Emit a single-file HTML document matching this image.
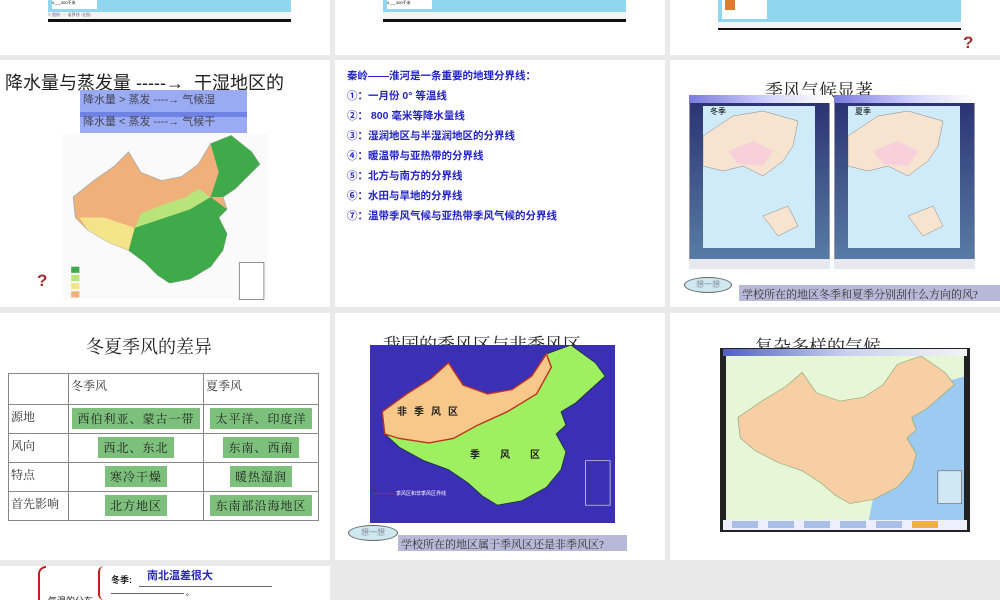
<!DOCTYPE html>
<html><head><meta charset="utf-8">
<style>
*{margin:0;padding:0;box-sizing:border-box}
body{width:1000px;height:600px;background:#e9e9e9;position:relative;overflow:hidden;font-family:"Liberation Sans","Noto Sans CJK SC",sans-serif}
.s{position:absolute;background:#fff;overflow:hidden}
.a{position:absolute}
.blue{color:#2323c8;font-weight:bold;font-size:10.5px;position:absolute;left:12px;white-space:nowrap}
.ser{font-family:"Liberation Serif","Noto Serif CJK SC",serif}
table{border-collapse:collapse}
td{border:1px solid #888;font-size:12px;color:#333;vertical-align:top;padding:3px 2px;font-family:"Liberation Serif","Noto Serif CJK SC",serif}
.g{background:#7cc07c;display:inline-block;padding:2px 5px;color:#222;letter-spacing:1px}
</style></head><body>
<svg width="0" height="0" style="position:absolute"><defs>
<path id="cn" d="M5,30 L15,22 L25,15 L32,8 L38,18 L48,22 L58,20 L66,14 L72,4 L82,0 L92,8 L96,14 L90,20 L84,26 L78,30 L80,36 L76,40 L80,48 L78,56 L72,64 L62,70 L52,72 L46,68 L40,62 L32,56 L22,52 L12,46 L6,40 Z"/>
</defs></svg>

<!-- Row 1 -->
<div class="s" style="left:0;top:0;width:330px;height:55px">
 <div class="a" style="left:48px;top:0;width:243px;height:12px;background:#8fd6ee"></div>
 <div class="a" style="left:52px;top:0;width:45px;height:9px;background:#fff;font-size:4px">0___300千米</div>
 <div class="a" style="left:48px;top:12px;width:243px;height:7px;background:#f4f4f4;font-size:4px;color:#668">⠿ 图例 ···· 省界线 ‹全图›</div>
 <div class="a" style="left:48px;top:19px;width:243px;height:3px;background:#111"></div>
</div>
<div class="s" style="left:335px;top:0;width:330px;height:55px">
 <div class="a" style="left:48px;top:0;width:243px;height:12px;background:#8fd6ee"></div>
 <div class="a" style="left:52px;top:0;width:45px;height:9px;background:#fff;font-size:4px">0___300千米</div>
 <div class="a" style="left:48px;top:12px;width:243px;height:7px;background:#f4f4f4"></div>
 <div class="a" style="left:48px;top:19px;width:243px;height:3px;background:#111"></div>
</div>
<div class="s" style="left:670px;top:0;width:330px;height:55px">
 <div class="a" style="left:48px;top:0;width:243px;height:22px;background:#8fd6ee"></div>
 <div class="a" style="left:52px;top:0;width:45px;height:19px;background:#fff"></div>
 <div class="a" style="left:55px;top:0;width:10px;height:10px;background:#e07a30"></div>
 <div class="a" style="left:48px;top:22px;width:243px;height:6px;background:#f4f4f4"></div>
 <div class="a" style="left:48px;top:28px;width:243px;height:2px;background:#111"></div>
 <div class="a" style="left:293px;top:33px;color:#a03030;font-weight:bold;font-size:17px">?</div>
</div>

<!-- Row 2 -->
<div class="s" style="left:0;top:60px;width:330px;height:247px">
 <div class="a" style="left:5px;top:9px;font-size:18px;color:#222;white-space:nowrap">降水量与蒸发量 -----→&nbsp; 干湿地区的</div>
 <div class="a" style="left:80px;top:30px;width:167px;height:43px;background:#8fa2f2;opacity:.9"></div>
 <div class="a" style="left:80px;top:52px;width:167px;height:5px;background:#6f82e6"></div>
 <div class="a" style="left:83px;top:31px;font-size:11px;color:#445;white-space:nowrap">降水量 &gt; 蒸发 ----→ 气候湿</div>
 <div class="a" style="left:83px;top:53px;font-size:11px;color:#445;white-space:nowrap">降水量 &lt; 蒸发 ----→ 气候干</div>
 <div class="a" style="left:63px;top:74px;width:205px;height:165px;background:#fafafa"></div>
 <svg class="a" style="left:63px;top:75px" width="205" height="165" viewBox="0 0 100 80">
  <use href="#cn" fill="#f0b07a" stroke="#aaa" stroke-width=".4"/>
  <path d="M40,62 L32,56 L35,45 L50,40 L62,36 L72,30 L80,36 L76,40 L80,48 L78,56 L72,64 L62,70 L52,72 L46,68Z" fill="#3eaa4a"/>
  <path d="M35,45 L50,40 L62,36 L72,30 L66,26 L60,30 L48,34 L38,38Z" fill="#b8e47a"/>
  <path d="M82,0 L92,8 L96,14 L90,20 L84,26 L78,30 L72,30 L76,18 L72,4Z" fill="#3eaa4a"/>
  <path d="M12,46 L22,52 L32,56 L35,45 L20,40 L8,40Z" fill="#f3e48a"/>
  <rect x="4" y="64" width="4" height="3" fill="#3eaa4a"/><rect x="4" y="68" width="4" height="3" fill="#b8e47a"/><rect x="4" y="72" width="4" height="3" fill="#f3e48a"/><rect x="4" y="76" width="4" height="3" fill="#f0b07a"/>
  <rect x="86" y="62" width="12" height="18" fill="#fff" stroke="#777" stroke-width=".4"/>
 </svg>
 <div class="a" style="left:37px;top:211px;color:#a03030;font-weight:bold;font-size:17px">?</div>
</div>

<div class="s" style="left:335px;top:60px;width:330px;height:247px">
 <div class="blue" style="top:8px">秦岭——淮河是一条重要的地理分界线：</div>
 <div class="blue" style="top:28px">①：一月份 0° 等温线</div>
 <div class="blue" style="top:48px">②： 800 毫米等降水量线</div>
 <div class="blue" style="top:68px">③：湿润地区与半湿润地区的分界线</div>
 <div class="blue" style="top:88px">④：暖温带与亚热带的分界线</div>
 <div class="blue" style="top:108px">⑤：北方与南方的分界线</div>
 <div class="blue" style="top:128px">⑥：水田与旱地的分界线</div>
 <div class="blue" style="top:148px">⑦：温带季风气候与亚热带季风气候的分界线</div>
</div>

<div class="s" style="left:670px;top:60px;width:330px;height:247px">
 <div class="a ser" style="left:95px;top:17px;font-size:18px;color:#222">季风气候显著</div>
 <div class="a" style="left:19px;top:35px;width:141px;height:174px;background:linear-gradient(#2a3070,#5a80a8);border:1px solid #99a"></div>
 <div class="a" style="left:19px;top:35px;width:141px;height:8px;background:linear-gradient(90deg,#7a7ae0,#d8d8ff 60%,#fff)"></div>
 <div class="a" style="left:33px;top:46px;width:112px;height:142px;background:#cfeaf8"></div>
 <svg class="a" style="left:33px;top:46px" width="112" height="142" viewBox="0 0 112 142"><path d="M0,30 L30,10 L60,5 L95,15 L90,40 L80,55 L60,70 L40,60 L20,65 L0,60Z" fill="#f6e4d0" stroke="#888" stroke-width=".5"/><path d="M25,45 L50,35 L70,45 L60,60 L35,58Z" fill="#f8d0dc"/><path d="M60,110 L85,100 L95,120 L75,130Z" fill="#f6e4d0" stroke="#888" stroke-width=".5"/></svg>
 <div class="a" style="left:40px;top:46px;font-size:8px">冬季</div>
 <div class="a" style="left:19px;top:199px;width:141px;height:10px;background:#e8e8f0"></div>
 <div class="a" style="left:164px;top:35px;width:141px;height:174px;background:linear-gradient(#2a3070,#5a80a8);border:1px solid #99a"></div>
 <div class="a" style="left:164px;top:35px;width:141px;height:8px;background:linear-gradient(90deg,#7a7ae0,#d8d8ff 60%,#fff)"></div>
 <div class="a" style="left:178px;top:46px;width:112px;height:142px;background:#cfeaf8"></div>
 <svg class="a" style="left:178px;top:46px" width="112" height="142" viewBox="0 0 112 142"><path d="M0,30 L30,10 L60,5 L95,15 L90,40 L80,55 L60,70 L40,60 L20,65 L0,60Z" fill="#f6e4d0" stroke="#888" stroke-width=".5"/><path d="M25,45 L50,35 L70,45 L60,60 L35,58Z" fill="#f8d0dc"/><path d="M60,110 L85,100 L95,120 L75,130Z" fill="#f6e4d0" stroke="#888" stroke-width=".5"/></svg>
 <div class="a" style="left:185px;top:46px;font-size:8px">夏季</div>
 <div class="a" style="left:164px;top:199px;width:141px;height:10px;background:#e8e8f0"></div>
 <div class="a" style="left:14px;top:217px;width:48px;height:16px;border-radius:50%;background:#cde8ee;border:1px solid #666;font-size:8px;color:#889;text-align:center;line-height:14px">想一想</div>
 <div class="a ser" style="left:69px;top:225px;width:261px;height:16px;background:#b8b8d8;font-size:11px;color:#333;padding:1px 3px;white-space:nowrap">学校所在的地区冬季和夏季分别刮什么方向的风?</div>
</div>

<!-- Row 3 -->
<div class="s" style="left:0;top:313px;width:330px;height:247px">
 <div class="a ser" style="left:86px;top:20px;font-size:18px;color:#222">冬夏季风的差异</div>
 <table class="a" style="left:8px;top:60px;width:311px;height:148px">
  <tr style="height:31px"><td style="width:60px"></td><td style="width:135px">冬季风</td><td>夏季风</td></tr>
  <tr><td>源地</td><td style="text-align:center"><span class="g">西伯利亚、蒙古一带</span></td><td style="text-align:center"><span class="g">太平洋、印度洋</span></td></tr>
  <tr><td>风向</td><td style="text-align:center"><span class="g">西北、东北</span></td><td style="text-align:center"><span class="g">东南、西南</span></td></tr>
  <tr><td>特点</td><td style="text-align:center"><span class="g">寒冷干燥</span></td><td style="text-align:center"><span class="g">暖热湿润</span></td></tr>
  <tr><td>首先影响</td><td style="text-align:center"><span class="g">北方地区</span></td><td style="text-align:center"><span class="g">东南部沿海地区</span></td></tr>
 </table>
</div>

<div class="s" style="left:335px;top:313px;width:330px;height:247px">
 <div class="a ser" style="left:48px;top:18px;font-size:18px;color:#222;white-space:nowrap">我国的季风区与非季风区</div>
 <div class="a" style="left:35px;top:32px;width:245px;height:178px;background:#3b2fb5"></div>
 <svg class="a" style="left:35px;top:32px" width="245" height="178" viewBox="0 0 100 80" preserveAspectRatio="none">
  <use href="#cn" fill="#9ef060" stroke="#234" stroke-width=".4"/>
  <path d="M5,30 L15,22 L25,15 L32,8 L38,18 L48,22 L58,20 L66,14 L72,4 L74,10 L68,22 L56,30 L44,36 L34,42 L24,44 L12,42 L6,40Z" fill="#f8c88a" stroke="#c03020" stroke-width=".6"/>
  <rect x="88" y="52" width="10" height="20" fill="none" stroke="#ddd" stroke-width=".3"/>
 </svg>
 <div class="a" style="left:62px;top:90px;font-size:10px;font-weight:bold;letter-spacing:7px;color:#222">非季风区</div>
 <div class="a" style="left:135px;top:133px;font-size:10px;font-weight:bold;letter-spacing:20px;color:#222">季风区</div>
 <div class="a" style="left:37px;top:180px;width:22px;height:1px;background:#c02040"></div>
 <div class="a" style="left:61px;top:177px;font-size:5px;color:#fff">季风区和非季风区界线</div>
 <div class="a" style="left:13px;top:212px;width:50px;height:16px;border-radius:50%;background:#cde8ee;border:1px solid #666;font-size:8px;color:#889;text-align:center;line-height:14px">想一想</div>
 <div class="a ser" style="left:63px;top:222px;width:229px;height:16px;background:#b8b8d8;font-size:11px;color:#333;padding:1px 3px;white-space:nowrap">学校所在的地区属于季风区还是非季风区?</div>
</div>

<div class="s" style="left:670px;top:313px;width:330px;height:247px">
 <div class="a ser" style="left:85px;top:20px;font-size:18px;color:#222">复杂多样的气候</div>
 <div class="a" style="left:50px;top:35px;width:250px;height:184px;background:#222"></div>
 <div class="a" style="left:53px;top:36px;width:244px;height:7px;background:linear-gradient(90deg,#5060c0,#c8d0f0 50%,#f4f4f4)"></div>
 <div class="a" style="left:56px;top:43px;width:238px;height:164px;background:#e8f6d8"></div>
 <svg class="a" style="left:56px;top:43px" width="238" height="164" viewBox="0 0 100 80" preserveAspectRatio="none">
  <path d="M70,20 L100,10 L100,80 L60,80 Z" fill="#9ccaf0"/>
  <use href="#cn" fill="#f8cfa4" stroke="#8a7" stroke-width=".3"/>
  <rect x="89" y="56" width="10" height="16" fill="#cfe8f4" stroke="#666" stroke-width=".3"/>
 </svg>
 <div class="a" style="left:53px;top:207px;width:244px;height:10px;background:#eef"></div>
 <div class="a" style="left:62px;top:208px;width:26px;height:7px;background:#a8c0e8"></div>
 <div class="a" style="left:98px;top:208px;width:26px;height:7px;background:#a8c0e8"></div>
 <div class="a" style="left:134px;top:208px;width:26px;height:7px;background:#a8c0e8"></div>
 <div class="a" style="left:170px;top:208px;width:26px;height:7px;background:#a8c0e8"></div>
 <div class="a" style="left:206px;top:208px;width:26px;height:7px;background:#a8c0e8"></div>
 <div class="a" style="left:242px;top:208px;width:26px;height:7px;background:#f0b040"></div>
</div>

<!-- Row 4 -->
<div class="s" style="left:0;top:566px;width:330px;height:34px">
 <div class="a" style="left:38px;top:0;width:8px;height:34px;border-left:2px solid #c02020;border-top:2px solid #c02020;border-radius:8px 0 0 0"></div>
 <div class="a" style="left:98px;top:0;width:6px;height:34px;border-left:2px solid #c02020;border-radius:6px 0 0 6px"></div>
 <div class="a" style="left:111px;top:7px;font-size:9px;font-weight:bold;color:#222">冬季:</div>
 <div class="a" style="left:139px;top:8px;width:133px;height:13px;border-bottom:1px solid #666"></div>
 <div class="a" style="left:147px;top:1px;font-size:11px;font-weight:bold;color:#2a2ab8">南北温差很大</div>
 <div class="a" style="left:111px;top:24px;width:73px;height:4px;border-bottom:1px solid #666"></div>
 <div class="a" style="left:186px;top:22px;font-size:7px">。</div>
 <div class="a" style="left:48px;top:28px;font-size:9px;color:#222">气温的分布</div>
</div>
</body></html>
